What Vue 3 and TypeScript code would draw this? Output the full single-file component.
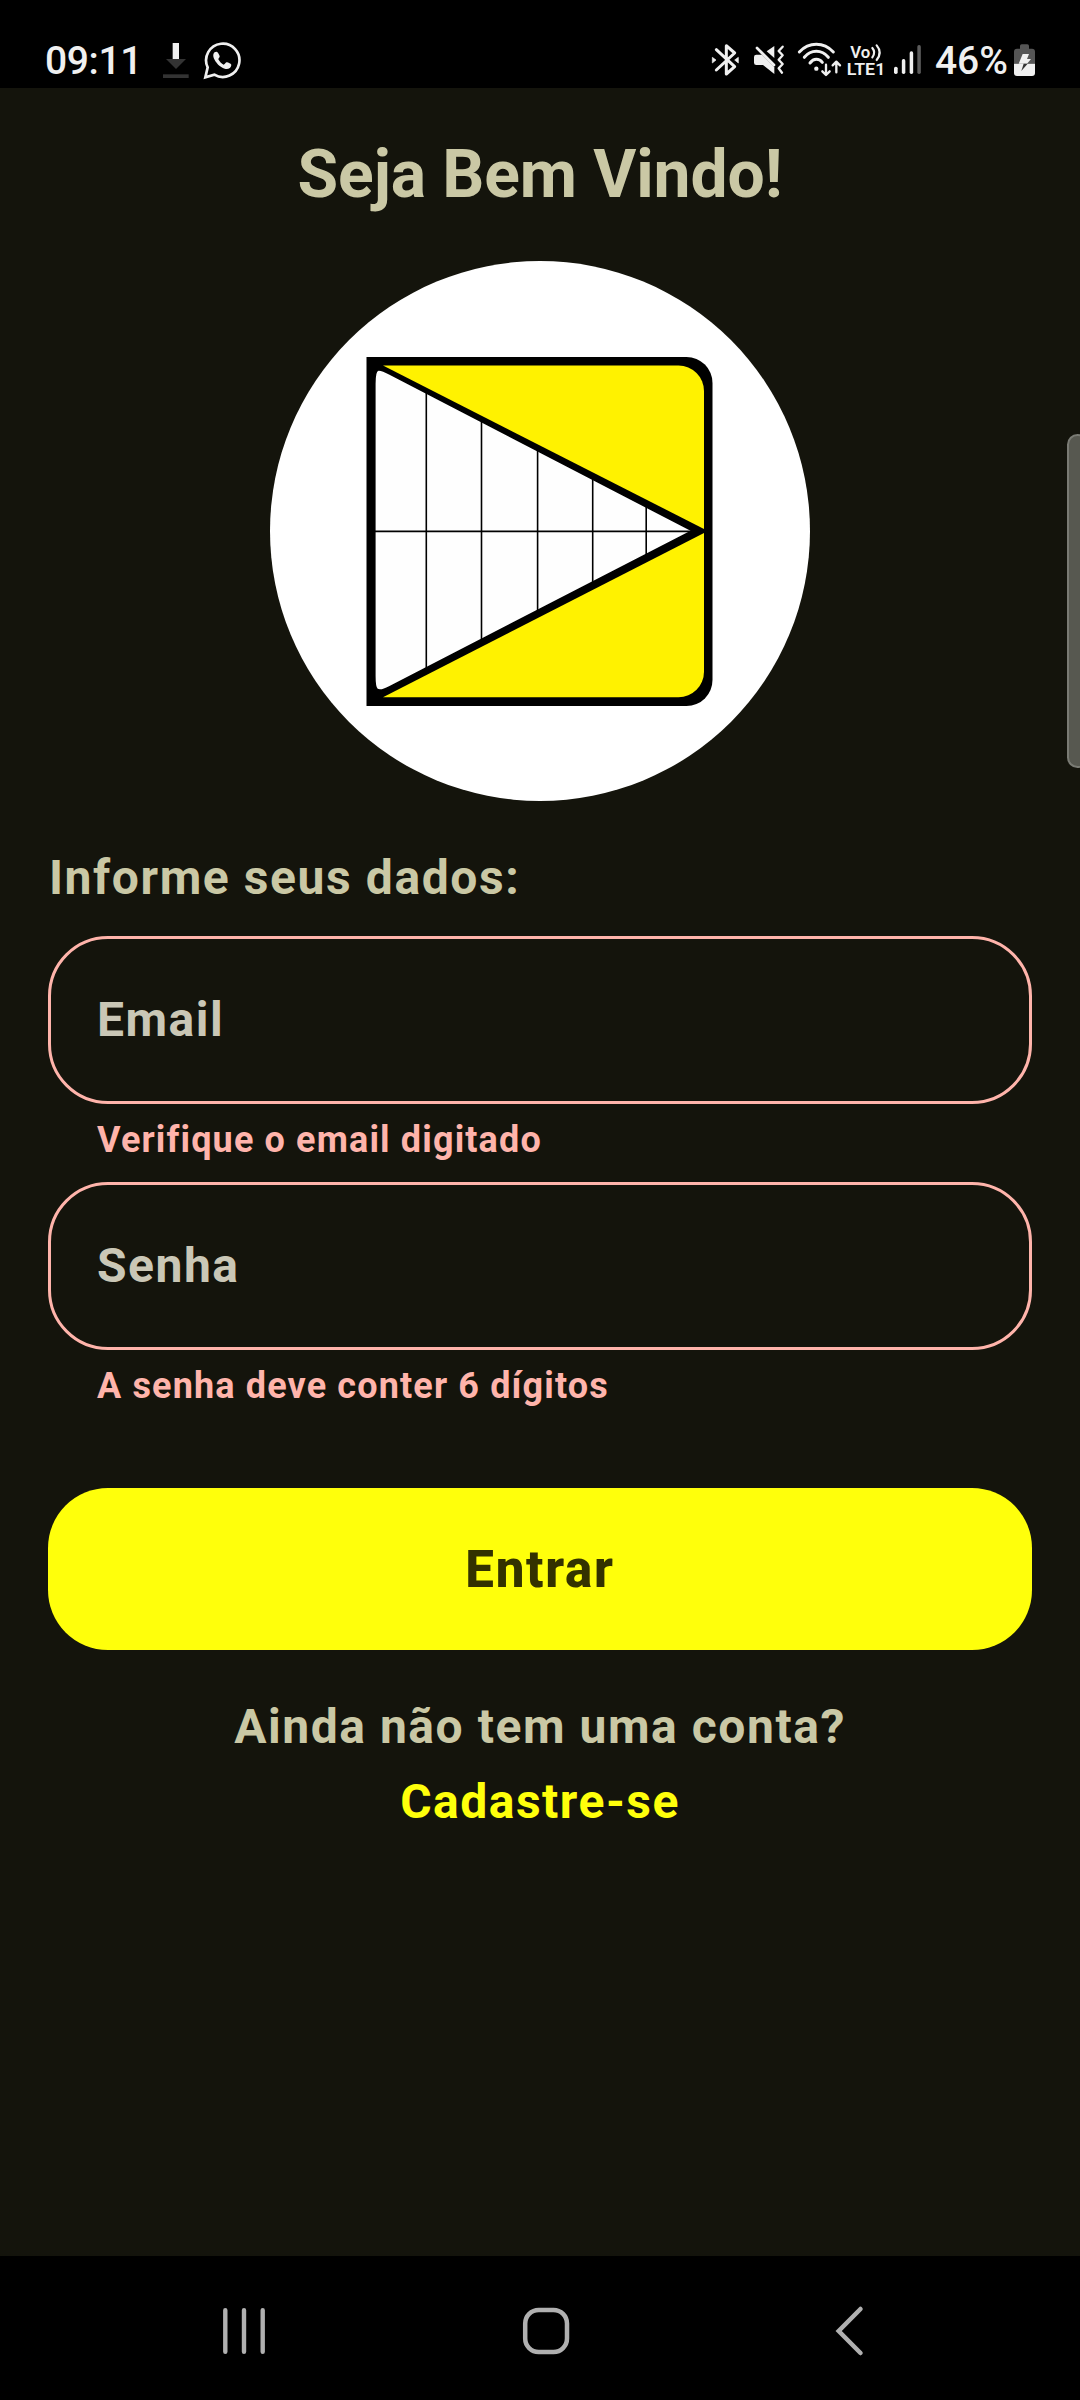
<script setup lang="ts">
import { ref } from 'vue'

interface Field {
  id: string
  label: string
  error: string
}

const fields: Field[] = [
  { id: 'email', label: 'Email', error: 'Verifique o email digitado' },
  { id: 'senha', label: 'Senha', error: 'A senha deve conter 6 dígitos' },
]

const clock = ref('09:11')
const battery = ref(46)
</script>

<template>
  <div class="screen">
    <header class="status">
      <span class="clock">{{ clock }}</span>
      <svg class="ic download" width="26" height="40" viewBox="399 60 78 120">
        <rect x="428" y="69" width="19" height="49" fill="#f0f0f0" />
        <path d="M408 117H468L438 147Z" fill="#333" />
        <rect x="399" y="163" width="77" height="11" fill="#333" />
      </svg>
      <svg class="ic whatsapp" width="39" height="40" viewBox="519 60 117 120">
        <path d="M533 142A50 50 0 1 1 553 164L526 172Z" fill="none" stroke="#f0f0f0" stroke-width="8" stroke-linejoin="miter" />
        <path d="M556 96C549 98 548 108 553 118C561 134 574 144 587 147C597 148 603 143 604 135C604 131 592 126 589 127C585 129 584 134 581 134C575 132 568 124 565 118C565 115 570 112 569 108C567 103 563 95 560 95Z" fill="#f0f0f0" />
      </svg>
      <span class="spacer" />
      <svg class="ic" width="29" height="40" viewBox="63 60 87 120">
        <path d="M79 89L134 140L109 162V77L134 99L79 150" fill="none" stroke="#f0f0f0" stroke-width="9" stroke-linejoin="round" stroke-linecap="round" />
        <path d="M67 112L78 120L67 129ZM145 112L134 120L145 129Z" fill="#f0f0f0" stroke="#f0f0f0" stroke-width="2" stroke-linejoin="round" />
      </svg>
      <svg class="ic mute" width="32" height="40" viewBox="189 60 96 120">
        <path d="M199 104H216L253 141V162L219 135H199Q192 135 192 128V111Q192 104 199 104Z" fill="#f0f0f0" />
        <path d="M230 94L253 78V114Z" fill="#f0f0f0" />
        <path d="M201 84L252 135" stroke="#f0f0f0" stroke-width="8" stroke-linecap="round" />
        <path d="M278 80L266 93L278 106L266 119L278 132L266 145L276 158" fill="none" stroke="#f0f0f0" stroke-width="7" stroke-linejoin="round" stroke-linecap="round" />
      </svg>
      <svg class="ic wifi" width="45" height="40" viewBox="321 60 135 120">
        <g fill="none" stroke="#f0f0f0" stroke-linecap="round" stroke-linejoin="round">
          <path d="M328 96Q350 73 379 73T430 96" stroke-width="9" />
          <path d="M343 112Q358 94 379 94T415 112" stroke-width="9" />
          <path d="M360 129Q368 118 379 118T397 127" stroke-width="9" />
          <path d="M408 134V164M397 154L408 165L419 154M439 157V126M428 136L439 125L450 136" stroke-width="7" />
        </g>
        <circle cx="379" cy="146" r="6.5" fill="#f0f0f0" />
      </svg>
      <svg class="ic volte" width="40" height="40" viewBox="468 60 120 120">
        <g class="net">
          <text x="481" y="115" textLength="60" lengthAdjust="spacingAndGlyphs">Vo</text>
          <text x="470" y="165" textLength="116" lengthAdjust="spacingAndGlyphs">LTE1</text>
        </g>
        <path d="M547 84Q558 97 547 112M560 76Q578 97 560 120" fill="none" stroke="#f0f0f0" stroke-width="6.5" stroke-linecap="round" />
      </svg>
      <svg class="ic signal" width="29" height="40" viewBox="39 60 87 120">
        <g fill="#f0f0f0">
          <rect x="42" y="140" width="11" height="22" rx="5" />
          <rect x="65.500" y="117" width="10.500" height="45" rx="5" />
          <rect x="89" y="94" width="10.500" height="68" rx="5" />
        </g>
        <rect x="112" y="75" width="10.500" height="87" rx="5" fill="#5c5c5c" />
      </svg>
      <span class="percent">{{ battery }}%</span>
      <svg class="ic" width="23" height="40" viewBox="399 60 69 120">
        <path d="M402 131V95Q402 86 411 86H420V78Q420 73 425 73H442Q447 73 447 78V86H456Q465 86 465 95V131Z" fill="#555" />
        <path d="M402 131H465V159Q465 168 456 168H411Q402 168 402 159Z" fill="#f0f0f0" />
        <path d="M428 102H447L441 117H453L441 131H416Z" fill="#f0f0f0" />
        <path d="M431 131H443L424 153Z" fill="#333" />
      </svg>
    </header>

    <main class="content">
      <h1 class="title">Seja Bem Vindo!</h1>
      <div class="logo">
        <svg width="540" height="540" viewBox="270 261 540 540">
          <path d="M366.500 357H686.500A26 26 0 0 1 712.500 383V680A26 26 0 0 1 686.500 706H366.500Z" fill="#000" />
          <path d="M383 365.500H678.500A25.500 25.500 0 0 1 704 391V529Z" fill="#fff200" />
          <path d="M383 697.200H678.500A25.500 25.500 0 0 0 704 671.700V533Z" fill="#fff200" />
          <path d="M375.600 384Q375.600 371 378.500 370.700Q382 370.500 389 374.500L690.500 530.800L389 686.200Q381 690.500 377.700 688.800Q375.600 687 375.600 676Z" fill="#fefefe" />
          <path d="M375 531.400H692M426.300 392V668M481.500 422V639M537.600 450V611M592.700 479V582M646.200 506V555" fill="none" stroke="#000" stroke-width="1.600" />
        </svg>
      </div>

      <form class="form" @submit.prevent>
        <h2 class="prompt">Informe seus dados:</h2>
        <div v-for="field in fields" :key="field.id" class="field">
          <label class="box">{{ field.label }}</label>
          <p class="error">{{ field.error }}</p>
        </div>
        <button class="submit" type="submit">Entrar</button>
      </form>

      <p class="question">Ainda não tem uma conta?</p>
      <a class="signup">Cadastre-se</a>
    </main>

    <nav class="navbar">
      <svg width="50" height="60" viewBox="219 2301 50 60">
        <path d="M225.300 2310.200V2351.800M244 2310.200V2351.800M262.700 2310.200V2351.800" stroke="#b0b0b0" stroke-width="4.400" stroke-linecap="round" />
      </svg>
      <svg width="60" height="60" viewBox="517 2301 60 60">
        <rect x="525.200" y="2310" width="41.800" height="42" rx="13.500" fill="none" stroke="#b0b0b0" stroke-width="4.500" />
      </svg>
      <svg width="50" height="60" viewBox="824 2301 50 60">
        <path d="M860.500 2309L838.700 2331L860.500 2353" fill="none" stroke="#b0b0b0" stroke-width="4.500" stroke-linecap="round" />
      </svg>
    </nav>

    <div class="edge-handle" />
  </div>
</template>

<style>
body {
  margin: 0;
  background: #000;
}
</style>

<style scoped>
.screen {
  position: relative;
  display: flex;
  flex-direction: column;
  width: 1080px;
  height: 2400px;
  overflow: hidden;
  background: #14140c;
  font-family: Roboto, "Liberation Sans", sans-serif;
}

.status {
  display: flex;
  box-sizing: border-box;
  height: 88px;
  padding: 40px 44px 0 45px;
  background: #000;
  color: #f0f0f0;
  font-size: 39px;
  font-weight: 500;
  line-height: 42px;
}

.ic {
  flex: none;
}

.clock {
  width: 118px;
  letter-spacing: -0.4px;
}

.whatsapp {
  margin-left: 14px;
}

.spacer {
  flex: 1;
}

.mute {
  margin-left: 13px;
}

.wifi {
  margin-left: 12px;
}

.volte {
  margin-left: 4px;
}

.signal {
  margin-left: 7px;
}

.net {
  fill: #f0f0f0;
  font-size: 52px;
  font-weight: 600;
}

.percent {
  box-sizing: border-box;
  width: 91px;
  padding-right: 5px;
  text-align: right;
}

.content {
  display: flex;
  flex: 1;
  flex-direction: column;
  align-items: center;
  padding: 45px 48px 0;
  color: #cac8a5;
  font-size: 48px;
  font-weight: 700;
  letter-spacing: 1.5px;
  line-height: 72px;
}

h1,
h2,
p {
  margin: 0;
  font-size: inherit;
  font-weight: inherit;
}

.title {
  font-size: 66px;
  letter-spacing: -0.1px;
  line-height: 84px;
}

.logo {
  width: 540px;
  height: 540px;
  margin-top: 44px;
  overflow: hidden;
  border-radius: 50%;
  background: #fff;
}

.logo svg {
  display: block;
}

.form {
  display: flex;
  flex-direction: column;
  width: 100%;
  margin-top: 41px;
}

.prompt {
  margin-bottom: 22px;
  padding-left: 1px;
  letter-spacing: 1.58px;
}

.field {
  margin-bottom: 18px;
}

.box {
  display: flex;
  align-items: center;
  box-sizing: border-box;
  height: 168px;
  padding-left: 46px;
  border: 3px solid #ffb4ab;
  border-radius: 60px;
  color: #cac7b6;
}

.error {
  margin-top: 12px;
  padding-left: 49px;
  color: #ffb4ab;
  font-size: 36px;
  letter-spacing: 1.14px;
  line-height: 48px;
}

.submit {
  height: 162px;
  margin-top: 60px;
  padding: 2px 0 0;
  border: 0;
  border-radius: 60px;
  background: #ffff0b;
  color: #333200;
  font: inherit;
  font-size: 51px;
  font-weight: 800;
  letter-spacing: 1.7px;
}

.question {
  margin-top: 41px;
  letter-spacing: 1.54px;
}

.signup {
  margin-top: 3px;
  color: #ffff0b;
}

.navbar {
  display: flex;
  align-items: center;
  justify-content: space-between;
  box-sizing: border-box;
  height: 144px;
  padding: 6px 206px 0 219px;
  background: #000;
}

.edge-handle {
  position: absolute;
  top: 434px;
  right: -8px;
  box-sizing: border-box;
  width: 21px;
  height: 334px;
  border: 2px solid #7a7b74;
  border-radius: 12px;
  background: #575850;
}
</style>
